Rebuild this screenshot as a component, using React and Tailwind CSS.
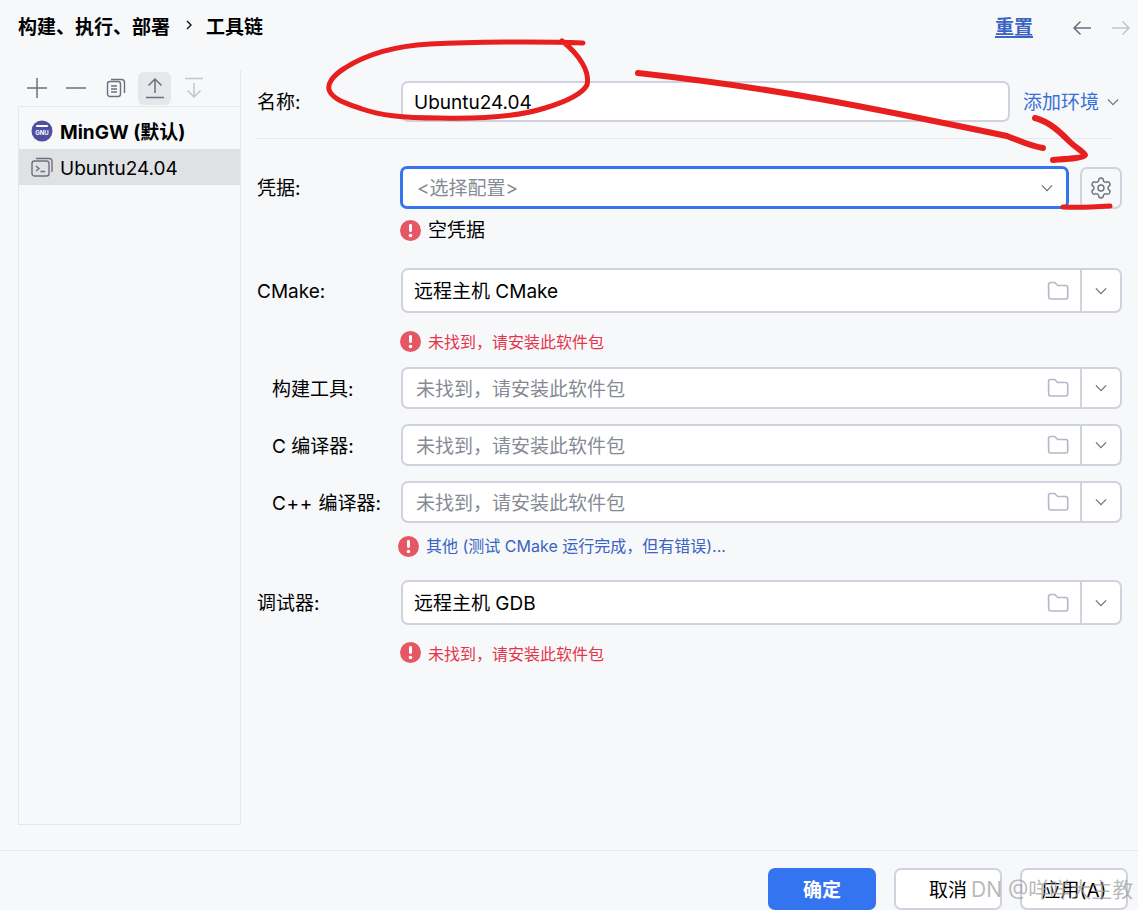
import React from "react";
import { Settings } from "lucide-react";

const Chevron = ({ c = "#6c707e" }) => (
  <svg width="16" height="16" viewBox="0 0 16 16" fill="none" stroke={c} strokeWidth="1.4"><path d="M2 5l6 6 6-6" transform="translate(1.2 1.2) scale(.85)" /></svg>
);

const Folder = () => (
  <svg width="22" height="20" viewBox="0 0 22 20" fill="none" stroke="#b4b8c6" strokeWidth="1.6"><path d="M1.5 3.5a2 2 0 0 1 2-2h4.2l3 3h8a2 2 0 0 1 2 2v9.500a2 2 0 0 1-2 2h-15a2 2 0 0 1-2-2z" /></svg>
);

const Err = () => (
  <svg width="21" height="21" viewBox="0 0 21 21" className="shrink-0"><circle cx="10.500" cy="10.500" r="10.500" fill="#e55765" /><rect x="9" y="4" width="3" height="8" rx="1.400" fill="#fff" /><circle cx="10.500" cy="15.500" r="1.800" fill="#fff" /></svg>
);

const Message = ({ text, cls, mt, ml = "ml-[143px]" }) => (
  <div className={`flex items-center gap-[7px] h-[22px] ${mt} ${ml}`}>
    <Err />
    <span className={cls}>{text}</span>
  </div>
);

const Combo = ({ label, value, placeholder, h, mt, indent, nudge = "" }) => (
  <div className={`flex items-center ${mt}`}>
    <div className={`w-[144px] shrink-0 text-black ${indent ? "pl-[15px]" : ""} ${nudge}`}>{label}</div>
    <div className={`flex-1 flex items-stretch bg-white border-2 border-[#d0d2de] rounded-[7px] ${h}`}>
      <div className={`flex-1 flex items-center ${nudge} ${placeholder ? "text-[#868a94] pl-[13px]" : "text-black pl-[11px]"}`}>{value}</div>
      <div className="flex items-center pr-[11px]"><Folder /></div>
      <div className="w-[40px] border-l-2 border-[#d0d2de] flex items-center justify-center"><Chevron /></div>
    </div>
  </div>
);

const msgRed = "pt-[2px] text-[16px] text-[#e5354a]";

export default function App() {
  return (
    <div className="relative h-[910px] overflow-hidden flex flex-col bg-[#f7f8fa] text-[19px] leading-[26px] text-black font-['Inter','Noto_Sans_CJK_SC',sans-serif]">
      <header className="h-[70px] shrink-0 flex items-start pt-[15px] pl-[18px] pr-[7px]">
        <span className="font-bold">构建、执行、部署</span>
        <svg width="10" height="14" viewBox="0 0 10 14" fill="none" stroke="#111" strokeWidth="1.400" className="ml-[14px] mr-[12px] mt-[3px]"><path d="M3 3l4 4-4 4" /></svg>
        <span className="font-bold">工具链</span>
        <span className="ml-auto font-semibold text-[#3a63c2] underline underline-offset-[2px] decoration-[1.500px]">重置</span>
        <svg width="20" height="16" viewBox="0 0 20 16" fill="none" stroke="#6c707e" strokeWidth="1.500" className="ml-[39px] mt-[5px]"><path d="M19 8H2M8.500 1.500L2 8l6.500 6.500" /></svg>
        <svg width="20" height="16" viewBox="0 0 20 16" fill="none" stroke="#c3c5cc" strokeWidth="1.500" className="ml-[19px] mt-[5px]"><path d="M1 8h17M11.500 1.500L18 8l-6.500 6.500" /></svg>
      </header>

      <main className="flex-1 flex pl-[18px] pr-[16px] pb-[25px]">
        <aside className="w-[223px] shrink-0 flex flex-col border-r border-[#e6e7ea]">
          <div className="h-[36px] shrink-0 flex items-center pl-[8px]">
            <button className="w-[22px] h-[22px] flex items-center justify-center mr-[17px]">
              <svg width="22" height="22" viewBox="0 0 22 22" fill="none" stroke="#6c707e" strokeWidth="1.500"><path d="M11 1v20M1 11h20" /></svg>
            </button>
            <button className="w-[22px] h-[22px] flex items-center justify-center mr-[19px]">
              <svg width="20" height="22" viewBox="0 0 20 22" fill="none" stroke="#6c707e" strokeWidth="1.500"><path d="M0 11h20" /></svg>
            </button>
            <button className="w-[20px] h-[22px] flex items-center justify-center mr-[12px]">
              <svg width="20" height="20" viewBox="0 0 20 20" fill="none" stroke="#6c707e" strokeWidth="1.400"><rect x="1.500" y="3.500" width="13" height="15" rx="2.500" /><path d="M5 1.500h10.500a3 3 0 0 1 3 3V15M5 8h6M5 11h6M5 14h6" /></svg>
            </button>
            <button className="w-[33px] h-[33px] rounded-[6px] bg-[#e6e7ea] flex items-center justify-center">
              <svg width="20" height="22" viewBox="0 0 20 22" fill="none" stroke="#6c707e" strokeWidth="1.500"><path d="M10 16V2M3.500 8.500L10 2l6.500 6.500M1 20.500h18" /></svg>
            </button>
            <button className="w-[20px] h-[22px] ml-[13px] flex items-center justify-center">
              <svg width="20" height="22" viewBox="0 0 20 22" fill="none" stroke="#c3c5cc" strokeWidth="1.500"><path d="M1 1.500h18M10 6v14M3.500 13.500L10 20l6.500-6.500" /></svg>
            </button>
          </div>
          <div className="flex-1 border border-r-0 border-[#e6e7ea] pt-[6px]">
            <div className="h-[36px] flex items-center pl-[12px] gap-[7px] font-bold">
              <svg width="22" height="22" viewBox="0 0 22 22" className="shrink-0">
                <circle cx="11" cy="11" r="10.500" fill="#4f4e9f" />
                <rect x="5" y="5" width="12" height="2" rx="1" fill="#fff" />
                <text x="11" y="15" textAnchor="middle" fill="#fff" fontSize="6" fontWeight="700" fontFamily="Inter, sans-serif">GNU</text>
              </svg>
              <span className="pt-[3px]">MinGW (默认)</span>
            </div>
            <div className="h-[36px] flex items-center pl-[12px] gap-[7px] bg-[#dfe1e5]">
              <svg width="22" height="22" viewBox="0 0 22 22" fill="none" stroke="#6c707e" strokeWidth="1.400" className="shrink-0">
                <rect x="1" y="5" width="17" height="15" rx="2.500" /><path d="M5 2.500h13.500a2.500 2.500 0 0 1 2.500 2.500v11M5 10l3 2.500L5 15M9.500 15.500H14" />
              </svg>
              <span className="pt-[3px]">Ubuntu24.04</span>
            </div>
          </div>
        </aside>

        <section className="flex-1 pl-[16px] flex flex-col">
          <div className="flex items-center mt-[11px]">
            <div className="w-[144px] shrink-0 pt-[2px]">名称:</div>
            <div className="w-[609px] h-[41px] bg-white border-2 border-[#d0d2de] rounded-[7px] flex items-center pl-[11px] pt-[2px]">Ubuntu24.04</div>
            <span className="ml-[13px] text-[#3a6fd8] pt-[2px]">添加环境</span>
            <span className="ml-[6px]"><Chevron c="#6c707e" /></span>
          </div>
          <div className="h-px bg-[#e6e7ea] mt-[16px] mr-[9px]" />

          <div className="flex items-center mt-[27px]">
            <div className="w-[143px] shrink-0 pt-[2px]">凭据:</div>
            <div className="w-[669px] h-[43px] bg-white border-[3px] border-[#3574f0] rounded-[7px] flex items-center pl-[14px] pr-[11px] text-[#868a94]">
              <span className="flex-1 pt-[2px]">&lt;选择配置&gt;</span>
              <Chevron />
            </div>
            <div className="ml-auto w-[42px] h-[42px] border-2 border-[#d0d2de] rounded-[7px] flex items-center justify-center">
              <Settings size={24} color="#6c707e" strokeWidth={1.400} />
            </div>
          </div>
          <Message text="空凭据" cls="pt-[2px]" mt="mt-[10px]" />

          <Combo label="CMake:" value="远程主机 CMake" h="h-[45px]" mt="mt-[27px]" nudge="pt-[2px]" />
          <Message text="未找到，请安装此软件包" cls={msgRed} mt="mt-[17px]" />

          <Combo label="构建工具:" value="未找到，请安装此软件包" placeholder indent h="h-[42px]" mt="mt-[15px]" nudge="pt-[4px]" />
          <Combo label="C 编译器:" value="未找到，请安装此软件包" placeholder indent h="h-[42px]" mt="mt-[15px]" nudge="pt-[4px]" />
          <Combo label={<><span className="tracking-[0.7px]">C++</span> 编译器:</>} value="未找到，请安装此软件包" placeholder indent h="h-[42px]" mt="mt-[15px]" nudge="pt-[4px]" />
          <Message text="其他 (测试 CMake 运行完成，但有错误)..." cls="text-[16px] text-[#3a63c2]" mt="mt-[12px]" ml="ml-[141px]" />

          <Combo label="调试器:" value="远程主机 GDB" h="h-[45px]" mt="mt-[23px]" nudge="pt-[2px]" />
          <Message text="未找到，请安装此软件包" cls="pt-[4px] text-[16px] text-[#e5354a]" mt="mt-[16px]" />
        </section>
      </main>

      <footer className="h-[60px] shrink-0 border-t border-[#e6e7ea] flex justify-end pt-[17px] pr-[10px] gap-[18px]">
        <button className="w-[108px] h-[42px] rounded-[7px] bg-[#3574f0] text-white font-bold pt-[4px]">确定</button>
        <button className="w-[108px] h-[42px] rounded-[7px] bg-white border-2 border-[#d0d2de] pt-[3px]">取消</button>
        <button className="w-[108px] h-[42px] rounded-[7px] bg-white border-2 border-[#d0d2de] pt-[3px]">应用(A)</button>
      </footer>

      <span className="absolute left-[971px] top-[877px] text-[21px] leading-[26px] text-[#9b9b9b]/70 whitespace-nowrap">DN @咩咩大主教</span>

      <svg width="1138" height="910" viewBox="0 0 1138 910" fill="none" stroke="#e81f1f" strokeLinecap="round" strokeLinejoin="round" className="absolute left-0 top-0 pointer-events-none">
        <path strokeWidth="5" d="M583 43C540 41 470 42 430 44C395 46 365 55 345 68C332 76 326 85 330 92C335 100 345 103 362 109C380 115 400 118 440 118C480 119 520 116 545 108C565 102 582 94 587 85C590 72 580 55 562 41" />
        <path strokeWidth="6" d="M638 73C700 80 770 90 820 99C870 108 930 120 1007 136C1020 141 1030 146 1043 148" />
        <path strokeWidth="6" d="M1035 118C1050 122 1060 132 1070 142C1076 148 1083 151 1085 155C1084 158 1065 159 1053 160" />
        <path strokeWidth="5" d="M1063 207C1080 208 1095 207 1110 206" />
      </svg>
    </div>
  );
}
